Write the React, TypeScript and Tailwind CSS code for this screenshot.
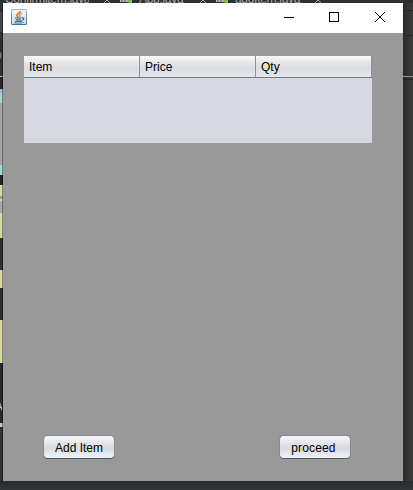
import React from "react";

const edgeSegments = [
  { h: 9, c: "bg-[#303234]" },
  { h: 20, c: "bg-[#44484b]" },
  { h: 18, c: "bg-[#2d2f30]" },
  { h: 13, c: "bg-[#2d2f30]", t: "p" },
  { h: 13, c: "bg-[#303234]" },
  { h: 1, c: "bg-[#b4b4b4]" },
  { h: 12, c: "bg-[#29292b]" },
  { h: 4, c: "bg-[#b5b1ca]" },
  { h: 10, c: "bg-[#a5d6d5]" },
  { h: 62, c: "bg-[#a6a6a6]" },
  { h: 10, c: "bg-[#a5d6d5]" },
  { h: 10, c: "bg-[#252527]" },
  { h: 11, c: "bg-[#d8d9a4]" },
  { h: 3, c: "bg-[#9ba3a6]" },
  { h: 2, c: "bg-[#d8d9a4]" },
  { h: 12, c: "bg-[#a5adad]" },
  { h: 25, c: "bg-[#d8d9a4]" },
  { h: 32, c: "bg-[#2e3031]" },
  { h: 18, c: "bg-[#d8d9a4]" },
  { h: 32, c: "bg-[#2e3031]" },
  { h: 43, c: "bg-[#d8d9a4]" },
  { h: 39, c: "bg-[#29292b]" },
  { h: 10, c: "bg-[#29292b] text-[#c3d5e8]", t: "A" },
  { h: 11, c: "bg-[#29292b]" },
  { h: 4, c: "bg-[#c0bdd9]" },
  { h: 54, c: "bg-[#323537]" },
];

function EditorTab({ name, width }: { name: string; width: string }) {
  return (
    <div className={`flex h-[3px] shrink-0 items-end overflow-hidden ${width}`}>
      <span className="mb-[-3px] text-[12px] leading-[14px] tracking-[-0.3px] whitespace-nowrap text-[#a9a9a9]">
        {name}
      </span>
    </div>
  );
}

function TabGap() {
  return (
    <div className="flex h-[3px] w-[50px] shrink-0 items-end overflow-hidden pl-[14px]">
      <svg width="33" height="3" viewBox="0 0 33 3">
        <path d="M1 3L4 0L7 3" fill="none" stroke="#aaa" />
        <path d="M17 0h8v2h-8z" fill="#b5bdc4" />
        <path d="M19 0v2M22 0v2" stroke="#4d5961" />
        <path d="M24 0h5v3h-3z" fill="#84b957" />
      </svg>
    </div>
  );
}

function JavaIcon() {
  return (
    <svg width="16" height="16" viewBox="0 0 16 16" fill="none">
      <defs>
        <linearGradient id="tile" x1="0" y1="0" x2="0" y2="1">
          <stop offset="0" stopColor="#f1f5f8" />
          <stop offset="1" stopColor="#cfdce4" />
        </linearGradient>
        <linearGradient id="frame" x1="0" y1="0" x2="0" y2="1">
          <stop offset="0" stopColor="#9eb4c3" />
          <stop offset="1" stopColor="#3f7195" />
        </linearGradient>
      </defs>
      <rect x="0.5" y="0.5" width="15" height="15" rx="0.5" fill="url(#tile)" stroke="url(#frame)" />
      <path d="M9.3 2C9.4 4 6 4.6 5.9 6.3C5.9 7.3 6.9 7.6 7.2 8.4" stroke="#d8742a" strokeWidth="1.6" />
      <path d="M10.9 4.4C8.9 5.1 8 5.9 8.8 6.7C9.4 7.3 9 7.9 8.5 8.4" stroke="#e08c46" strokeWidth="1.3" />
      <path d="M4 9H10.5M4.8 10.9H10M4 12.7H11M10.8 8.9C13.9 8.3 12.8 11 10.8 11.4" stroke="#33688d" strokeWidth="1.2" />
      <path d="M3 14.1C6 14.5 11 14.4 13.2 13.3" stroke="#477796" strokeWidth="0.7" />
    </svg>
  );
}

function HeaderCell({ label, width }: { label: string; width: string }) {
  return (
    <div className={`h-[21px] border-r border-[#8d9199] pl-[5px] leading-[22px] ${width}`}>
      {label}
    </div>
  );
}

function NimbusButton({ label, spacing = "" }: { label: string; spacing?: string }) {
  return (
    <button
      className={`flex h-[22px] w-[70px] items-center justify-center rounded-[4px] bg-[linear-gradient(#f7f8fa_0%,#e4e6eb_30%,#d7dae1_58%,#e9ecf4_85%,#eef1f8_100%)] pt-[2px] leading-[14px] shadow-[0_1px_0_#4d535c,0_0_0_1px_#858a92] ${spacing}`}
    >
      {label}
    </button>
  );
}

export default function App() {
  return (
    <div className="flex h-[490px] w-[413px] flex-col overflow-hidden bg-[#343638] font-['Liberation_Sans',Arial,sans-serif] text-[12px] text-black">
      <div className="flex h-[3px] w-full shrink-0 overflow-hidden bg-[#2e3032]">
        <div className="w-[5px] shrink-0" />
        <EditorTab name="Confirmitem.java" width="w-[84px]" />
        <TabGap />
        <EditorTab name="App.java" width="w-[46px]" />
        <TabGap />
        <EditorTab name="addItem.java" width="w-[68px]" />
        <svg className="ml-[11px] shrink-0" width="8" height="3" viewBox="0 0 8 3">
          <path d="M1 3L4 0L7 3" stroke="#aaa" fill="none" />
        </svg>
      </div>
      <div className="flex h-[478px] shrink-0">
        <div className="flex w-[3px] shrink-0 flex-col overflow-hidden text-[#6f9c6c]">
          {edgeSegments.map((s, i) => (
            <div
              key={i}
              className={`shrink-0 overflow-hidden border-r border-black/40 leading-[11px] ${s.c}`}
              style={{ height: s.h }}
            >
              {s.t && <span className="ml-[-5px]">{s.t}</span>}
            </div>
          ))}
        </div>
        <main className="flex w-[400px] shrink-0 flex-col bg-[#999999]">
          <header className="flex h-[30px] shrink-0 items-center justify-between bg-white pl-2">
            <div className="pb-[2px]">
              <JavaIcon />
            </div>
            <svg width="138" height="30" viewBox="0 0 138 30" fill="none" stroke="#000">
              <path d="M19 14.5H29M64.5 9.5H73.5V18.5H64.5Z" shapeRendering="crispEdges" />
              <path d="M110 9L120 19M120 9L110 19" strokeWidth="1" />
            </svg>
          </header>
          <section className="mt-[23px] ml-[21px] h-[87px] w-[348px] shrink-0 bg-[#d6d9e1]">
            <div className="flex h-[22px] border-b border-[#70757e] bg-[linear-gradient(#fafafc_0%,#e8e9ec_28%,#dadce1_58%,#e6e8ee_100%)]">
              <HeaderCell label="Item" width="w-[116px]" />
              <HeaderCell label="Price" width="w-[116px]" />
              <HeaderCell label="Qty" width="w-[116px]" />
            </div>
          </section>
          <footer className="mt-auto mb-[23px] flex justify-between pr-[53px] pl-[41px]">
            <NimbusButton label="Add Item" />
            <NimbusButton label="proceed" spacing="tracking-[0.15px] pr-[3px]" />
          </footer>
        </main>
        <aside className="flex w-[10px] flex-col bg-[linear-gradient(90deg,#28292b,#343638_60%,#383b3d)]">
          <div className="h-[8px] border-b border-[#242628]" />
          <div className="h-[25px] border-b border-[#242628]" />
          <div className="h-[41px] border-b border-[#929496]" />
          <div className="h-[3px] border-b border-[#242628]" />
        </aside>
      </div>
      <div className="h-[9px] bg-[linear-gradient(#282a2b,#333638)]" />
    </div>
  );
}
